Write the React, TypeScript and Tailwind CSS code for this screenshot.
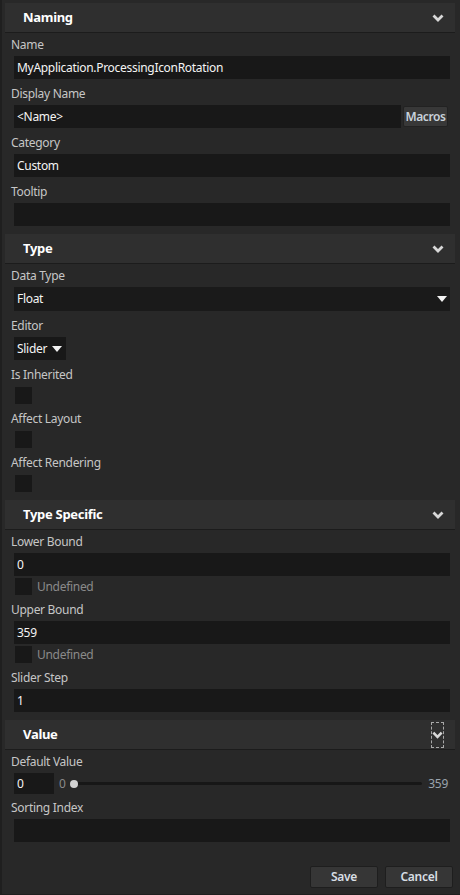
import React from "react";

const font = { fontFamily: '"Noto Sans", "Open Sans", sans-serif' };

function Chevron() {
  return (
    <svg width="12" height="8" viewBox="0 0 12 8" className="block">
      <path d="M1.5 1.5 L6 6 L10.5 1.5" fill="none" stroke="#d8d8d8" strokeWidth="2.8" strokeLinecap="butt" strokeLinejoin="miter" />
    </svg>
  );
}

function Caret() {
  return (
    <svg width="10" height="6" viewBox="0 0 10 6" className="block">
      <path d="M0 0 H10 L5 6 Z" fill="#f2f2f2" />
    </svg>
  );
}

function Header({ title, focused }: { title: string; focused?: boolean }) {
  return (
    <div className="h-[30px] bg-[#2f2f2f] border-b border-[#1c1c1c] flex items-center pl-[18px] pr-[11px]">
      <span className="flex-1 text-[13px] font-bold text-white tracking-[-0.3px]">{title}</span>
      {focused ? (
        <div className="w-[13px] h-[26px] border border-dashed border-[#a8a8a8] flex items-center justify-center">
          <Chevron />
        </div>
      ) : (
        <Chevron />
      )}
    </div>
  );
}

function Label({ text }: { text: string }) {
  return <div className="h-[23px] leading-[23px] pl-[6px] text-[12px] text-[#c6c6c6] tracking-[-0.3px]">{text}</div>;
}

function Input({ value }: { value?: string }) {
  return (
    <div className="ml-[9px] mr-[5px] h-[23px] bg-[#181818] flex items-center pl-[3px] text-[12px] text-[#f4f4f4] tracking-[-0.3px]">
      {value}
    </div>
  );
}

function Field({ label, value }: { label: string; value?: string }) {
  return (
    <div>
      <Label text={label} />
      <Input value={value} />
    </div>
  );
}

function Check({ label }: { label: string }) {
  return (
    <div>
      <Label text={label} />
      <div className="h-[18px] pt-[1px] pl-[10px]">
        <div className="w-[17px] h-[17px] bg-[#181818]" />
      </div>
    </div>
  );
}

function Undefined() {
  return (
    <div className="h-[19px] pt-[2px] pl-[10px] flex items-start gap-[5px]">
      <div className="w-[17px] h-[17px] bg-[#181818]" />
      <span className="text-[12px] leading-[17px] text-[#8a8a8a] tracking-[-0.3px]">Undefined</span>
    </div>
  );
}

export default function App() {
  return (
    <div style={font} className="w-[460px] h-[895px] bg-[#282828] border-l-2 border-b border-[#1f1f1f] flex flex-col">
      <div className="pt-[3px] pl-[3px] pr-[5px] flex flex-col">
        {/* Naming */}
        <Header title="Naming" />
        <div className="flex flex-col gap-[3px]">
          <Field label="Name" value="MyApplication.ProcessingIconRotation" />
          <div>
            <Label text="Display Name" />
            <div className="ml-[9px] mr-[7px] flex gap-[2px]">
              <div className="flex-1 h-[23px] bg-[#181818] flex items-center pl-[3px] text-[12px] text-[#f4f4f4] tracking-[-0.3px]">&lt;Name&gt;</div>
              <div className="w-[45px] mt-[1px] h-[21px] rounded-[2px] bg-[#383838] border border-[#222] flex items-center justify-center text-[12px] font-semibold text-[#c9d2dc] tracking-[-0.4px]">
                Macros
              </div>
            </div>
          </div>
          <Field label="Category" value="Custom" />
          <Field label="Tooltip" />
        </div>

        {/* Type */}
        <div className="mt-[8px]">
          <Header title="Type" />
        </div>
        <div className="flex flex-col gap-[3px]">
          <div>
            <Label text="Data Type" />
            <div className="ml-[9px] mr-[5px] h-[24px] bg-[#1a1a1a] flex items-center pl-[3px] pr-[3px] text-[12px] text-[#f4f4f4] tracking-[-0.3px]">
              <span className="flex-1">Float</span>
              <Caret />
            </div>
          </div>
          <div>
            <Label text="Editor" />
            <div className="ml-[9px] w-[52px] h-[23px] bg-[#181818] flex items-center pl-[3px] gap-[5px] text-[12px] text-[#f4f4f4] tracking-[-0.3px]">
              <span>Slider</span>
              <Caret />
            </div>
          </div>
          <Check label="Is Inherited" />
          <Check label="Affect Layout" />
          <Check label="Affect Rendering" />
        </div>

        {/* Type Specific */}
        <div className="mt-[8px]">
          <Header title="Type Specific" />
        </div>
        <div className="flex flex-col gap-[3px]">
          <div>
            <Field label="Lower Bound" value="0" />
            <Undefined />
          </div>
          <div>
            <Field label="Upper Bound" value="359" />
            <Undefined />
          </div>
          <Field label="Slider Step" value="1" />
        </div>

        {/* Value */}
        <div className="mt-[8px]">
          <Header title="Value" focused />
        </div>
        <div className="flex flex-col gap-[2px]">
          <div>
            <Label text="Default Value" />
            <div className="ml-[9px] mr-[7px] h-[21px] flex items-center tracking-[-0.3px]">
              <div className="w-[40px] h-[21px] bg-[#181818] flex items-center pl-[3px] text-[12px] text-[#f4f4f4]">0</div>
              <span className="ml-[5px] text-[12px] text-[#8a8a8a]">0</span>
              <div className="relative flex-1 ml-[4px] mr-[6px] h-[8px] flex items-center">
                <div className="w-full h-[3px] bg-[#171717] rounded-full" />
                <div className="absolute left-0 top-0 w-[8px] h-[8px] rounded-full bg-[#d2d2d2]" />
              </div>
              <span className="text-[12px] text-[#9aa3ad]">359</span>
            </div>
          </div>
          <Field label="Sorting Index" />
        </div>
      </div>

      <div className="flex-1" />

      <div className="flex justify-end gap-[7px] pr-[7px] pb-[6px]">
        <div className="w-[68px] h-[22px] rounded-[2px] bg-[#363636] border border-[#1e1e1e] flex items-center justify-center text-[12px] font-semibold text-[#d8dee4] tracking-[-0.3px]">
          Save
        </div>
        <div className="w-[68px] h-[22px] rounded-[2px] bg-[#363636] border border-[#1e1e1e] flex items-center justify-center text-[12px] font-semibold text-[#d8dee4] tracking-[-0.3px]">
          Cancel
        </div>
      </div>
    </div>
  );
}
